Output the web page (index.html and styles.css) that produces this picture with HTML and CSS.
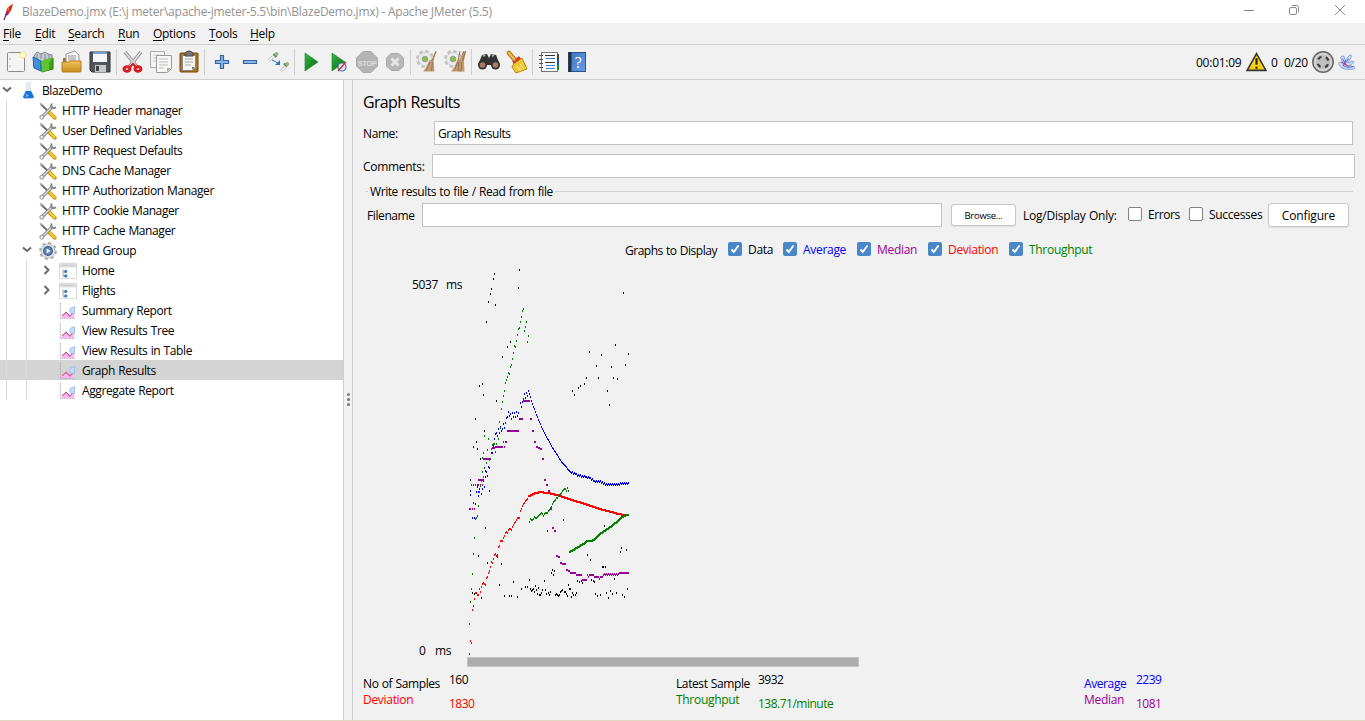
FILE: index.html
```html
<!DOCTYPE html>
<html lang="en">
<head>
<meta charset="utf-8">
<title>BlazeDemo.jmx - Apache JMeter (5.5)</title>
<link rel="stylesheet" href="styles.css">
</head>
<body>
<svg class="defs" width="0" height="0">
  <defs>
    <linearGradient id="gGreen" x1="0" y1="0" x2="1" y2="1"><stop offset="0" stop-color="#39b54a"/><stop offset="1" stop-color="#006b0a"/></linearGradient>
    <linearGradient id="gBlue" x1="0" y1="0" x2="1" y2="1"><stop offset="0" stop-color="#3d74bd"/><stop offset="1" stop-color="#64a0e6"/></linearGradient>
    <linearGradient id="gGold" x1="0" y1="0" x2="0" y2="1"><stop offset="0" stop-color="#f3c55c"/><stop offset="1" stop-color="#c58a1c"/></linearGradient>
    <symbol id="tools" viewBox="0 0 20 20">
      <path d="M2 2.500L13 13" stroke="#666" stroke-width="2"/><path d="M1 1.500L5 4" stroke="#aaa" stroke-width="1.500"/>
      <path d="M11.500 11.500L17.500 17.500" stroke="#b58a10" stroke-width="4.200" stroke-linecap="round"/><path d="M11.500 11.300L17.300 17" stroke="#f8cb22" stroke-width="2.700" stroke-linecap="round"/>
      <path d="M3.500 16.500L15 5" stroke="#777" stroke-width="3.400"/><path d="M3.500 16.500L15 5" stroke="#ddd" stroke-width="1.600"/>
      <path d="M14 1.500L13.500 5L15.500 7L19 6" fill="none" stroke="#888" stroke-width="2.200"/><circle cx="3.200" cy="16.800" r="2.300" fill="#e6e6e6" stroke="#888"/>
    </symbol>
    <symbol id="chart" viewBox="0 0 20 20">
      <path d="M3 18v-3l5-4 4 4.500 5-1.500v4z" fill="#f9b9f0"/>
      <path d="M17.500 5.500q-6 0-5.500 5 1.500 3.500 5 3z" fill="#c2dcfb" stroke="#93b7e8" stroke-width=".9"/>
      <path d="M3.500 15.500l4.500-4 4 4 3-2.500" fill="none" stroke="#c05a90" stroke-width="1.200"/><path d="M1.500 1V18.500H18" fill="none" stroke="#aaa" stroke-dasharray="2 1"/>
    </symbol>
    <symbol id="controller" viewBox="0 0 20 20">
      <path d="M.5 1.500h19v17H.5z" fill="#fff" stroke="#d2d2d2"/><path d="M1 2h18v4H1z" fill="#dcdcdc"/><path d="M3 4h14" stroke="#bbb" stroke-dasharray="1 1"/>
      <path d="M4.500 8v8h2M4.500 11h2" fill="none" stroke="#999"/><circle cx="7.500" cy="10.500" r="1.800" fill="#3b78c4"/><circle cx="7.500" cy="15.500" r="1.800" fill="#3b78c4"/>
    </symbol>
    <symbol id="gear" viewBox="0 0 20 20">
      <circle cx="10" cy="10" r="8.500" fill="none" stroke="#aaa" stroke-width="2.800" stroke-dasharray="3.340 3.340"/><circle cx="10" cy="10" r="7.800" fill="#e0e0e0" stroke="#b0b0b0" stroke-width=".7"/>
      <circle cx="10" cy="10" r="4.800" fill="#5c86c4" stroke="#3d5b90" stroke-width="1.400"/><path d="M8.500 7.200l4.500 2.800-4.500 2.800z" fill="#eef5ff"/>
    </symbol>
    <symbol id="flask" viewBox="0 0 20 20">
      <path d="M8.500 0h4v7l4 9q0 2-2 2h-8q-2 0-2-2l4-9z" fill="#e4ecf5" stroke="#c9d4de" stroke-width=".6"/><path d="M7.700 10h5.600l3.200 6.300q-.3 1.700-2 1.700h-8q-1.700 0-2-1.700z" fill="#1674d8"/><path d="M7.500 13l4 2-4 2z" fill="#72b4f5"/>
    </symbol>
    <symbol id="down" viewBox="0 0 10 10"><path d="M1 2.500l4 3.500L9 2.500" fill="none" stroke="#6a6a6a" stroke-width="2"/></symbol>
    <symbol id="right" viewBox="0 0 10 10"><path d="M2.500 1l4 4-4 4" fill="none" stroke="#6a6a6a" stroke-width="2"/></symbol>
    <symbol id="check" viewBox="0 0 14 14"><path d="M3.500 7.500l2.300 2.500 4.700-6.500" fill="none" stroke="#fff" stroke-width="1.900"/></symbol>
    <symbol id="cogbroom" viewBox="0 0 24 24">
      <circle cx="10" cy="9" r="7.500" fill="none" stroke="#c4c4c4" stroke-width="3" stroke-dasharray="3.500 2.390"/><circle cx="10" cy="9" r="6.500" fill="#ececec" stroke="#c4c4c4" stroke-width=".7"/><circle cx="10" cy="9" r="2.800" fill="#86c440" stroke="#999"/>
      <path d="M20.500 1l1 .5-3 9 1 11H8q4-4 6-11l3-1z" fill="#c39a72"/><path d="M21 1l-4 10M15 12l-4 9M17.500 12l-1 9" stroke="#93704e" stroke-width=".9"/>
    </symbol>
  </defs>
</svg>

<header class="titlebar">
  <svg class="feather" viewBox="0 0 12 18"><path d="M11 1Q5 3 4 9l-1 4 3-1Q10 7 11 1z" fill="#d3222c"/><path d="M5 9L2 17" stroke="#692b86" stroke-width="1.300"/><path d="M9 2q-3 2-3 6" stroke="#f28a23" fill="none"/></svg>
  <span class="caption">BlazeDemo.jmx (E:\j meter\apache-jmeter-5.5\bin\BlazeDemo.jmx) - Apache JMeter (5.5)</span>
  <svg class="winctl" viewBox="0 0 106 20" fill="none" stroke="#8a8a8a"><path d="M0 10.500h10M91 5l10 10M101 5l-10 10"/><rect x="45.500" y="7.500" width="7" height="7" rx="1.500"/><path d="M47.500 5.500h5q2 0 2 2v5"/></svg>
</header>
<nav class="menubar">
  <span class="m1"><u>F</u>ile</span><span class="m2"><u>E</u>dit</span><span class="m3"><u>S</u>earch</span><span class="m4"><u>R</u>un</span><span class="m5"><u>O</u>ptions</span><span class="m6"><u>T</u>ools</span><span class="m7"><u>H</u>elp</span>
</nav>
<div class="toolbar">
  <svg class="tool" viewBox="0 0 24 24"><rect x="3.500" y="2.500" width="17" height="19" rx="1" fill="#f4f4f2" stroke="#8a8a8a"/><path d="M6 8v2M6 15v2" stroke="#aaa"/><circle cx="19" cy="5" r="3" fill="#fffbd0" stroke="#f3e98b"/></svg>
  <svg class="tool" viewBox="0 0 24 24"><path d="M2 6l3-4 4 2 4-2 3 2 4 1v12H2z" fill="#c3cace" stroke="#79868f"/><path d="M5 4v6M9 3v6M13 4v6M17 4v6" stroke="#889"/><path d="M1 7l8 4v10l-7-3z" fill="#3e91db" stroke="#2061a0"/><path d="M9 12l12-4v11l-11 3z" fill="#38a616" stroke="#227c08"/><path d="M9 12l4-3 8-1-4 5v7l-7 2z" fill="#60c334"/></svg>
  <svg class="tool" viewBox="0 0 24 24"><path d="M3 8h7l2 3h9v9H3z" fill="#9c732a"/><path d="M6 4l9-3 4 4v10H6z" fill="#f4f4f4" stroke="#999"/><path d="M8 6h8M8 8h8M8 10h8" stroke="#999"/><path d="M2 12h7l2-1h10v10q0 1-1 1H3q-1 0-1-1z" fill="url(#gGold)" stroke="#b27e23"/></svg>
  <svg class="tool" viewBox="0 0 24 24"><path d="M2 2h20v20H4l-2-2z" fill="#50565c" stroke="#333"/><rect x="5" y="2" width="14" height="10" fill="#f7f7f7"/><path d="M5 3h14" stroke="#78a0cb" stroke-width="2"/><rect x="7" y="15" width="11" height="7" fill="#c9c9c9"/><rect x="8" y="16" width="3" height="5" fill="#444"/></svg>
  <i class="sep"></i>
  <svg class="tool" viewBox="0 0 24 24"><path d="M4 2l12 15M20 2L8 17" stroke="#888" stroke-width="3.500"/><path d="M4 2l12 15M20 2L8 17" stroke="#e0e0e0" stroke-width="1.800"/><g fill="#fff" stroke="#d21d22" stroke-width="3"><ellipse cx="6" cy="19" rx="3" ry="2.300"/><ellipse cx="17" cy="19" rx="3" ry="2.300"/></g><path d="M9 17l3-3 3 3" fill="none" stroke="#d21d22" stroke-width="2"/></svg>
  <svg class="tool" viewBox="0 0 24 24"><path d="M1.500 1.500h14v16h-14z" fill="#f4f4f4" stroke="#aaa"/><path d="M4 5h9M4 8h9M4 11h5" stroke="#ccc"/><path d="M7.500 5.500h15v13l-4 4h-11z" fill="#f7f7f5" stroke="#999"/><path d="M10 9h9M10 12h9M10 15h9M10 18h5" stroke="#bbb"/><path d="M22 18h-4v4z" fill="#aaa"/></svg>
  <svg class="tool" viewBox="0 0 24 24"><rect x="3" y="3" width="18" height="19" rx="1" fill="#ac721e" stroke="#704708"/><path d="M5.500 5.500h13v12l-3 3h-10z" fill="#f4f4f2" stroke="#888"/><path d="M8 9h8M8 12h8M8 15h6" stroke="#aaa"/><path d="M8 6V3q4-4 8 0v3z" fill="#777" stroke="#444"/><path d="M18 17h-3v3z" fill="#777"/></svg>
  <i class="sep wide"></i>
  <svg class="tool" viewBox="0 0 24 24"><path d="M10.500 5.500h3v5h5v3h-5v5h-3v-5h-5v-3h5z" fill="#8ab5e4" stroke="#3465a4" stroke-width="1.200"/></svg>
  <svg class="tool" viewBox="0 0 24 24"><path d="M5.500 10.500h13v3h-13z" fill="#8ab5e4" stroke="#3465a4" stroke-width="1.200"/></svg>
  <svg class="tool" viewBox="0 0 24 24"><path d="M2 11l7-6M15 21l6-6" stroke="#bbb" stroke-width="2.600"/><path d="M2 11l7-6M15 21l6-6" stroke="#fff" stroke-width="1.300"/><path d="M7.500 4l3 3M18 13.500l3 3" stroke="#5f8154" stroke-width="2"/><circle cx="10.500" cy="4" r="2" fill="#8fb87c"/><circle cx="21" cy="14" r="2" fill="#8fb87c"/><path d="M6 10l6 3" stroke="#2878d0"/><path d="M14 10v5H9z" fill="#2878d0"/></svg>
  <i class="sep"></i>
  <svg class="tool" viewBox="0 0 24 24"><path d="M6 3l13 9L6 21z" fill="url(#gGreen)" stroke="#188420" stroke-width=".6"/></svg>
  <svg class="tool" viewBox="0 0 24 24"><path d="M5 3l13 9L5 21z" fill="url(#gGreen)" stroke="#188420" stroke-width=".6"/><circle cx="15" cy="17" r="4" fill="#dce6f2" stroke="#3d73b4" stroke-width="1.200"/><path d="M11 21l8-9" stroke="#dc2424" stroke-width="1.300"/></svg>
  <svg class="tool" viewBox="0 0 24 24"><path d="M8 1.500h8L22.500 8v8L16 22.500H8L1.500 16V8z" fill="#b4b4b4" stroke="#aaa"/><text x="12" y="15.500" class="stoptext">STOP</text></svg>
  <svg class="tool" viewBox="0 0 24 24"><path d="M8 3.500h8L20.500 8v8L16 20.500H8L3.500 16V8z" fill="#b8b8b8" stroke="#aaa"/><path d="M8.500 8.500l7 7M15.500 8.500l-7 7" stroke="#e7e7e7" stroke-width="2.800"/></svg>
  <i class="sep"></i>
  <svg class="tool" viewBox="0 0 24 24"><use href="#cogbroom"/></svg>
  <svg class="tool" viewBox="0 0 24 24"><use href="#cogbroom"/><path d="M22 1l1 .5-2 9 .5 11H15q1-8 2-12z" fill="#c39a72"/><path d="M17 1l-2 10M22.500 1l-3 10M16 12l-1 9M19 12l-1 9" stroke="#93704e"/></svg>
  <i class="sep wide"></i>
  <svg class="tool" viewBox="0 0 24 24"><path d="M5 5l5-1 2 4 2-4 5 1 4 10H1z" fill="#333"/><path d="M6 6l2-1M15 6l2-1" stroke="#aaa" stroke-width="2"/><circle cx="5.500" cy="15" r="4.500" fill="#333"/><circle cx="18.500" cy="15" r="4.500" fill="#333"/><circle cx="5.500" cy="15" r="2.800" fill="#ae7961"/><circle cx="18.500" cy="15" r="2.800" fill="#ae7961"/></svg>
  <svg class="tool" viewBox="0 0 24 24"><path d="M10 11l7-3 5 11-11 4-4-6z" fill="#edc833" stroke="#b38b10"/><path d="M12 16l4 5M15 14l4 5" stroke="#fff09a"/><path d="M7 11l7-5 2 3-7 5z" fill="#d5402c"/><path d="M4 3l5 6" stroke="#b1791a" stroke-width="4.500" stroke-linecap="round"/><path d="M4 3l5 6" stroke="#edb94c" stroke-width="2.500" stroke-linecap="round"/></svg>
  <i class="sep"></i>
  <svg class="tool" viewBox="0 0 24 24"><rect x="4.500" y="2.500" width="16" height="19" fill="#fff" stroke="#777"/><path d="M21 4v7" stroke="#444" stroke-width="2"/><path d="M21 10v5" stroke="#1753b2" stroke-width="2"/><path d="M21 15v5" stroke="#168b22" stroke-width="2"/><path d="M2 5.500h4M2 9.500h4M2 13.500h4M2 17.500h4" stroke="#555"/><path d="M8 5.500h10M8 12.500h10" stroke="#333"/><path d="M9 8.500h9M9 15.500h9M9 18.500h9" stroke="#3b7cce"/></svg>
  <svg class="tool" viewBox="0 0 24 24"><rect x="3.500" y="2.500" width="17" height="19" fill="url(#gBlue)" stroke="#2c5689"/><path d="M5 2v20" stroke="#252c35" stroke-width="3"/><text x="13" y="18" class="helptext">?</text></svg>
  <span class="spacer"></span>
  <span class="clock">00:01:09</span>
  <svg class="warn" viewBox="0 0 20 19"><path d="M10 1.500L19 17.500H1z" fill="#f8ce13" stroke="#333" stroke-width="1.500"/><path d="M10 6v6M10 14v2" stroke="#222" stroke-width="2"/></svg>
  <span class="errors">0</span><span class="threads">0/20</span>
  <svg class="running" viewBox="0 0 24 24"><circle cx="12" cy="12" r="10.200" fill="#ccc" stroke="#666" stroke-width="1.500"/><circle cx="12" cy="12" r="8" fill="#c0c0c0" stroke="#ddd"/><circle cx="12" cy="12" r="5.500" fill="none" stroke="#3c3c3c" stroke-width="2.300" stroke-dasharray="4 4.640" stroke-dashoffset="-2.300"/></svg>
  <svg class="plugin" viewBox="0 0 20 20" stroke="#6f94d8" stroke-width=".9" fill="#cddcf6"><path d="M5 11L3 5q1-3 4-1l1 5 4-6q3-2 3 1l-4 7 6-2q2 1-1 3l-4 2 6 1q2 2-1 3H8q-5-1-7-5-1-4 4-2z"/><path d="M4 10l8 5M9 8l-3 6" stroke="#b03b6d" stroke-width="1.200" fill="none"/><path d="M5 14l6 2 6-1M5 6l3 6 4-6" stroke="#3566c8" fill="none"/></svg>
</div>

<div class="workspace">
  <aside class="tree">
    <div class="row"><b class="exp"><svg><use href="#down"/></svg></b><svg class="ico"><use href="#flask"/></svg><span>BlazeDemo</span></div>
    <div class="row"><i class="guide"></i><b class="exp"></b><svg class="ico"><use href="#tools"/></svg><span>HTTP Header manager</span></div>
    <div class="row"><i class="guide"></i><b class="exp"></b><svg class="ico"><use href="#tools"/></svg><span>User Defined Variables</span></div>
    <div class="row"><i class="guide"></i><b class="exp"></b><svg class="ico"><use href="#tools"/></svg><span>HTTP Request Defaults</span></div>
    <div class="row"><i class="guide"></i><b class="exp"></b><svg class="ico"><use href="#tools"/></svg><span>DNS Cache Manager</span></div>
    <div class="row"><i class="guide"></i><b class="exp"></b><svg class="ico"><use href="#tools"/></svg><span>HTTP Authorization Manager</span></div>
    <div class="row"><i class="guide"></i><b class="exp"></b><svg class="ico"><use href="#tools"/></svg><span>HTTP Cookie Manager</span></div>
    <div class="row"><i class="guide"></i><b class="exp"></b><svg class="ico"><use href="#tools"/></svg><span>HTTP Cache Manager</span></div>
    <div class="row"><i class="guide"></i><b class="exp"><svg><use href="#down"/></svg></b><svg class="ico"><use href="#gear"/></svg><span>Thread Group</span></div>
    <div class="row"><i class="guide"></i><i class="guide"></i><b class="exp"><svg><use href="#right"/></svg></b><svg class="ico"><use href="#controller"/></svg><span>Home</span></div>
    <div class="row"><i class="guide"></i><i class="guide"></i><b class="exp"><svg><use href="#right"/></svg></b><svg class="ico"><use href="#controller"/></svg><span>Flights</span></div>
    <div class="row"><i class="guide"></i><i class="guide"></i><b class="exp"></b><svg class="ico"><use href="#chart"/></svg><span>Summary Report</span></div>
    <div class="row"><i class="guide"></i><i class="guide"></i><b class="exp"></b><svg class="ico"><use href="#chart"/></svg><span>View Results Tree</span></div>
    <div class="row"><i class="guide"></i><i class="guide"></i><b class="exp"></b><svg class="ico"><use href="#chart"/></svg><span>View Results in Table</span></div>
    <div class="row selected"><i class="guide"></i><i class="guide"></i><b class="exp"></b><svg class="ico"><use href="#chart"/></svg><span>Graph Results</span></div>
    <div class="row"><i class="guide"></i><i class="guide"></i><b class="exp"></b><svg class="ico"><use href="#chart"/></svg><span>Aggregate Report</span></div>
  </aside>
  <div class="splitter"><i></i><i></i><i></i></div>
  <main class="panel">
    <h1>Graph Results</h1>
    <div class="field name"><label>Name:</label><div class="input">Graph Results</div></div>
    <div class="field comments"><label>Comments:</label><div class="input"></div></div>
    <div class="legend"><span>Write results to file / Read from file</span></div>
    <div class="file">
      <label>Filename</label><div class="input"></div><div class="button browse">Browse...</div>
      <span class="log">Log/Display Only:</span><i class="box"></i><span class="err">Errors</span><i class="box"></i><span class="suc">Successes</span><div class="button configure">Configure</div>
    </div>
    <div class="graphs">
      <span class="glabel">Graphs to Display</span>
      <svg class="tick"><use href="#check"/></svg><span class="g1">Data</span>
      <svg class="tick"><use href="#check"/></svg><span class="g2 blue">Average</span>
      <svg class="tick"><use href="#check"/></svg><span class="g3 purple">Median</span>
      <svg class="tick"><use href="#check"/></svg><span class="g4 red">Deviation</span>
      <svg class="tick"><use href="#check"/></svg><span class="g5 green">Throughput</span>
    </div>
    <div class="chart">
      <div class="axis"><div class="ymax"><span>5037</span><span>ms</span></div><div class="ymin"><span>0</span><span>ms</span></div></div>
      <div class="plotcol"><svg id="plot" width="392" height="392" viewBox="7 0 392 392" shape-rendering="crispEdges"></svg><div class="scroll"></div></div>
    </div>
    <div class="stats">
      <div class="s1"><p><span>No of Samples</span><em>160</em></p><p class="red"><span>Deviation</span><em>1830</em></p></div>
      <div class="s2"><p><span>Latest Sample</span><em>3932</em></p><p class="green"><span>Throughput</span><em>138.71/minute</em></p></div>
      <div class="s3"><p><span class="blue">Average</span><em class="blue">2239</em></p><p class="purple"><span>Median</span><em>1081</em></p></div>
    </div>
  </main>
</div>
<script src="plot.js"></script>
</body>
</html>
```
FILE: styles.css
```css
* { box-sizing: border-box; }
body { margin: 0; width: 1365px; height: 721px; overflow: hidden; display: flex; flex-direction: column; background: #f1f1f1; color: #000; font: 12px/20px "Open Sans", "Noto Sans", sans-serif; letter-spacing: -0.4px; word-spacing: 0.6px; white-space: nowrap; border-bottom: 1px solid #ddd8c0; }
.defs { position: absolute; }
i, em, b { font-style: normal; font-weight: normal; display: block; }
svg { display: block; flex: none; }
u { text-underline-offset: 2px; }

.titlebar { height: 23px; flex: none; background: #fff; display: flex; align-items: center; color: #929292; }
.feather { width: 12px; height: 18px; margin: 0 8px 0 2px; }
.caption { flex: 1; letter-spacing: -0.24px; word-spacing: 0; padding-top: 1px; }
.winctl { width: 106px; height: 20px; margin: 0 15px 3px 0; }

.menubar { height: 22px; flex: none; display: flex; align-items: center; padding-left: 3px; border-bottom: 1px solid #cfcfcf; letter-spacing: -0.28px; }
.m1 { width: 32px; } .m2 { width: 33px; } .m3 { width: 50px; } .m4 { width: 35px; } .m5 { width: 56px; } .m6 { width: 41px; }

.toolbar { height: 35px; flex: none; display: flex; align-items: center; padding-left: 2px; border-bottom: 1px solid #cdcdcd; }
.tool { width: 24px; height: 24px; margin: 0 2px; }
.sep { width: 1px; height: 26px; margin: 0 2px 0 1.500px; background: #cfcfcf; }
.sep.wide { margin-right: 3px; }
.stoptext { font: bold 7.500px "Liberation Sans", sans-serif; fill: #dcdcdc; text-anchor: middle; letter-spacing: -0.5px; }
.helptext { font: 16px "Liberation Serif", serif; fill: #fff; text-anchor: middle; }
.spacer { flex: 1; }
.clock { width: 50px; letter-spacing: -0.25px; padding-top: 1px; }
.warn { width: 21px; height: 20px; }
.errors { width: 13px; margin-left: 4px; padding-top: 1px; }
.threads { width: 27px; letter-spacing: -0.25px; padding-top: 1px; }
.running { width: 24px; height: 24px; }
.plugin { width: 18px; height: 18px; margin: 0 9px 0 3px; }

.workspace { flex: 1; min-height: 0; display: flex; }
.tree { width: 344px; flex: none; background: #fff; border-right: 1px solid #cfcfcf; }
.row { height: 20px; display: flex; align-items: center; }
.row span { padding-top: 2px; }
.row.selected { background: #d4d4d4; }
.guide { width: 20px; height: 20px; flex: none; background: linear-gradient(#dadada, #dadada) 6px 0 / 1px 20px no-repeat; }
.exp { width: 18px; padding-left: 2px; flex: none; }
.exp svg { width: 10px; height: 10px; }
.ico { width: 20px; height: 20px; margin-right: 4px; padding: 2px 1px 0 1px; }
.splitter { width: 9px; flex: none; border-right: 1px solid #cfcfcf; display: flex; flex-direction: column; align-items: center; justify-content: center; gap: 2px; padding-bottom: 2px; }
.splitter i { width: 3px; height: 3px; border-radius: 50%; background: #777; }

.panel { flex: 1; min-width: 0; padding: 10px 10px 0 10px; display: flex; flex-direction: column; }
h1 { margin: 0; font-size: 16px; line-height: 24px; font-weight: normal; letter-spacing: -0.65px; padding-bottom: 1px; }
.field { display: flex; align-items: center; }
.input { height: 24px; line-height: 24px; border: 1px solid #c2c2c2; background: #fff; padding-left: 3px; }
.name { margin-top: 6px; }
.name label { width: 71px; } .name .input { width: 919px; letter-spacing: -0.5px; }
.comments { margin-top: 9px; letter-spacing: -0.3px; }
.comments label { width: 69px; } .comments .input { width: 923px; }
.field label { padding-top: 1px; }
.legend { height: 20px; margin: 3px 0 0 2px; display: flex; align-items: center; gap: 2px; width: 988px; letter-spacing: -0.42px; }
.legend span { padding-top: 1px; line-height: 19px; }
.legend::before { content: ""; width: 3px; height: 1px; background: #d2d2d2; }
.legend::after { content: ""; flex: 1; height: 1px; background: #d2d2d2; }
.file { display: flex; align-items: center; height: 24px; margin: 2px 0 0 4px; }
.file label { width: 55px; padding-top: 1px; }
.file .input { width: 520px; margin-right: 9px; }
.button { border: 1px solid #c6c6c6; border-radius: 3px; background: #fff; text-align: center; box-shadow: 0 1px 1px #ddd; }
.browse { width: 65px; height: 22px; line-height: 22px; font-size: 9.500px; letter-spacing: -0.25px; }
.configure { width: 81px; height: 24px; line-height: 24px; letter-spacing: -0.15px; }
.log { width: 105px; margin-left: 7px; flex: none; padding-top: 1px; letter-spacing: -0.22px; }
.box { width: 14px; height: 14px; flex: none; border: 1px solid #828282; border-radius: 2px; background: #fff; margin-bottom: 2px; }
.err { width: 41px; margin-left: 6px; letter-spacing: -0.4px; } .suc { width: 59px; margin-left: 6px; letter-spacing: -0.3px; }
.graphs { height: 20px; display: flex; align-items: center; margin: 13px 0 0 262px; letter-spacing: -0.3px; }
.glabel { width: 103px; padding-top: 2px; letter-spacing: -0.48px; }
.tick { width: 14px; height: 14px; border-radius: 2px; background: #4a87c8; margin: 0 6px 2px 0; }
.g1 { width: 35px; } .g2 { width: 54px; } .g3 { width: 51px; } .g4 { width: 61px; }
.blue { color: #00f; } .purple { color: #909; } .red { color: #f00; } .green { color: #008000; }

.chart { display: flex; height: 402px; margin-top: 5px; }
.axis { width: 104px; flex: none; display: flex; flex-direction: column; justify-content: space-between; padding: 10px 0 6px 49px; }
.axis div { display: flex; }
.ymax span:first-child { width: 34px; }
.ymin { padding-left: 7px; }
.ymin span:first-child { width: 16px; }
.scroll { width: 392px; height: 10px; background: #acacac; border: 1px solid #c4c4c4; }
.stats { display: flex; margin-top: 3px; }
.stats p { margin: 0; display: flex; height: 20px; }
.stats p span { padding-top: 4px; } .stats p + p span { padding-top: 0; } .stats p + p em { padding-top: 4px; }
.stats p + p span { letter-spacing: -0.3px; }
.stats em { letter-spacing: -0.5px; }
.s1 { width: 313px; } .s2 { width: 408px; }
.s1 span { width: 86px; } .s2 span { width: 82px; } .s3 span { width: 52px; }
```
FILE: plot.js
```js
const svg = document.getElementById('plot');

// Plots one-pixel samples; coordinates are in thirds of a pixel below the given top offset.
function dots(color, top, points) {
  let d = '';
  for (const p of points.split(' ')) {
    const [x, y] = p.split(',').map(Number);
    d += `M${Math.floor(x / 3)} ${top + Math.round(y / 3) - 1}h1v2h-1z`;
  }
  add(color, d);
}

// Fills in one sample per pixel between the knots, with an optional ripple.
function curve(color, top, knots, ripple = 0, width = 1) {
  const k = knots.split(' ').map(p => p.split(',').map(Number));
  let d = '';
  for (let i = 0; i < k.length - 1; i++) {
    const [x0, y0] = k[i], [x1, y1] = k[i + 1];
    for (let x = x0; x < x1; x += 3) {
      const px = Math.floor(x / 3);
      const y = y0 + (y1 - y0) * (x - x0) / (x1 - x0) + (px % 2 ? ripple : -ripple);
      d += `M${px} ${top + Math.round(y / 3) - 1}h${width}v2h${-width}z`;
    }
  }
  add(color, d);
}

// Horizontal runs: start-end,y
function runs(color, top, list) {
  let d = '';
  for (const r of list.split(' ')) {
    const [span, y] = r.split(',');
    const [a, b] = span.split('-').map(v => Math.round(v / 3));
    d += `M${a} ${top + Math.round(y / 3) - 1}h${b - a}v2h${a - b}z`;
  }
  add(color, d);
}

function add(color, d) {
  const path = document.createElementNS('http://www.w3.org/2000/svg', 'path');
  path.setAttribute('d', d);
  path.setAttribute('fill', color);
  svg.appendChild(path);
}

const BLACK = '#000', BLUE = '#00f', RED = '#f00', GREEN = '#008000', PURPLE = '#909';

dots(BLACK, 0, '178,14 103,27 100,42 175,69 94,72 91,87 85,111 106,120 490,84 79,171 151,231 142,246 127,276 67,357 58,363 70,390 109,408 466,240 505,267 388,261 424,270 496,300 409,303 454,306 460,339 472,342 379,339 415,339 373,357 361,363 355,369 337,378 343,390 442,378 448,420');
dots(BLACK, 120, '46,102 73,138 49,171 40,186 52,192 61,222 31,285 88,318');
dots(BLACK, 245, '76,54 310,30 262,63 433,48 55,138 112,141 82,159 124,162 382,135 391,150 484,114 481,126 499,120 427,171 430,171 436,171 277,180 274,189 283,183 280,195 208,210 253,213 160,216 118,225 226,228 325,225 196,231 202,231 184,237 211,237 217,240 220,237 229,240 214,243 247,240 304,243 328,237 37,249 43,252 64,264 134,258 148,258 154,258 172,261 232,252 238,255 241,255 244,250 256,240 259,252 265,249 271,246 268,255 286,255 289,252 292,255 295,258 298,255 301,246 307,240 313,246 316,246 319,252 322,259 331,237 334,261 337,249 340,255 346,255 349,249 352,213 358,216 364,213 367,219 394,210 400,213 403,216 463,207 406,252 412,258 421,255 439,249 445,264 451,243 457,252 469,249 487,255 493,261 502,237 235,234 223,246');

dots(BLUE, 120, '31,318 31,330 37,399 43,399 46,402 40,354 46,357 43,372 49,320 52,306 55,333 58,312 55,321 64,327 67,311 70,288 73,306 76,276 76,258 82,273 79,261 85,246 88,249 94,204 97,204 97,190 100,183 103,162 106,147 109,144 112,153 115,132 118,143 121,126 124,138 127,132 130,117 133,129 136,114 139,99 142,96 145,81 148,93 151,87 154,102 157,84 160,96 163,84 166,96 169,81 172,93 175,84 181,54 184,66 187,51 190,42 193,27 196,38 199,24 202,33 205,18');
curve(BLUE, 120, '208,27 217,57 235,105 250,138 274,183 304,230 331,261');
curve(BLUE, 120, '331,263 346,265 352,271 388,278 403,289 424,291 436,298 475,298 487,295 508,297', 1.6);

runs(PURPLE, 120, '189-210,48 177-189,102 211-216,102 141-177,138 217-222,138 129-132,171 135-141,171 222-227,171 96-99,190 99-105,188 105-129,186 132-135,186 228-233,186 234-239,189 240-245,192 68-93,222 246-251,222 54-71,285 252-257,285 33-36,300 39-43,300 46-49,300 51-57,300 60-63,300 66-69,300 258-263,300 264-269,318 270-275,372 27-34,372 36-39,372 42-45,372');
runs(PURPLE, 245, '276-281,54 282-287,63 288-294,138 293-300,141 300-306,158 306-312,161 312-318,162 318-324,180 324-330,183 330-348,189 348-366,195 366-381,210 381-384,195 384-387,201 387-402,195 402-417,201 417-420,206 420-429,201 477-495,190 495-507,188');
curve(PURPLE, 245, '429,194 477,194', 1.2);

dots(RED, 245, '28,433 31,393 34,399 37,300 40,288 43,267 46,249 49,249 52,255 55,255 58,237 61,246 64,231 67,222 70,219 73,222 76,225 79,204 82,201 85,189 88,183 91,171 94,156 97,160 100,147 103,135 106,132 109,138 112,135 115,110 118,107 121,93 124,92 127,92 130,83 133,77 136,68 139,66 142,69 145,60 148,57 151,57 154,60 157,51 160,45 163,39 166,36 169,30 172,24 175,24 178,24 181,3');
dots(RED, 120, '184,372 187,363 190,357 193,354 196,348 199,345 202,342');
curve(RED, 120, '205,333 220,326 235,322 262,323 280,328 301,334 331,344 382,360 421,373 460,383 475,388 505,390', 0, 2);

dots(GREEN, 0, '190,132 187,138 184,156 181,171 199,171 196,186 178,189 175,192 193,198 172,210 205,213 169,228 202,231 163,243 166,246 160,264 157,282 154,300 151,306 145,324 148,327 142,336 139,345 136,354 133,378 130,393 127,411');
dots(GREEN, 120, '124,72 118,111 121,129 73,153 115,163 85,162 103,176 109,177 100,177 97,180 82,195 94,192 106,201 67,219 70,204 91,222 88,225 79,234 73,249 67,261 70,276 64,288 61,303 58,321 55,363');
dots(GREEN, 245, '28,342 31,276 34,237 37,192 40,132 43,84 46,27 49,24 52,18');
curve(GREEN, 245, '208,36 211,27 217,30 223,21 229,24 238,15 244,9 250,16 256,9 262,9 268,-2 274,-9 280,-24 292,-38 301,-48 307,-57 313,-63 316,-66', 1);
dots(GREEN, 120, '316,312 319,318 322,309 325,318');
curve(GREEN, 245, '328,126 346,115 376,97 379,92 391,94 406,85 421,70 451,50 469,35 484,22 496,15 505,14', 0, 2);
```
